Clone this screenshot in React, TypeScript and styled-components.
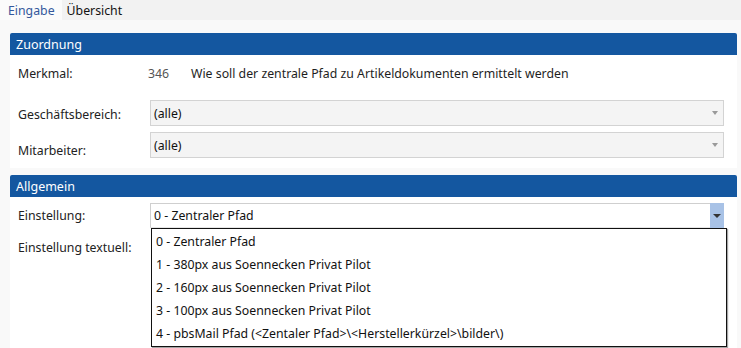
import React from "react";
import styled, { createGlobalStyle } from "styled-components";

const GlobalStyle = createGlobalStyle`
  html, body { margin: 0; padding: 0; }
  body {
    background: #f9f9f9;
    font-family: "Segoe UI", "Noto Sans", "Open Sans", sans-serif;
    font-size: 12.3px;
    color: #1e1e1e;
    overflow: hidden;
  }
`;

const Page = styled.div`
  width: 741px;
  height: 348px;
  overflow: hidden;
`;

const TabBar = styled.div`
  display: flex;
  height: 20px;
  background: #f2f2f2;
`;

const Tab = styled.div<{ $active?: boolean }>`
  display: flex;
  align-items: center;
  padding: 0 7px 0 ${(p) => (p.$active ? "8px" : "5px")};
  background: ${(p) => (p.$active ? "#fbfbfb" : "transparent")};
  color: ${(p) => (p.$active ? "#34589c" : "#111")};
  font-size: 12.3px;
`;

const Content = styled.div`
  padding: 13px 4px 0 10px;
  display: flex;
  flex-direction: column;
  gap: 7px;
`;

const Panel = styled.section`
  background: #fff;
`;

const PanelHeader = styled.div`
  height: 22px;
  display: flex;
  align-items: center;
  padding-left: 6px;
  background: #1457a0;
  color: #fff;
  font-size: 12.5px;
  border-radius: 2px 2px 0 0;
`;

const PanelBody = styled.div<{ $pb?: number }>`
  padding: 6px 13px ${(p) => p.$pb ?? 10}px 8px;
  display: flex;
  flex-direction: column;
`;

const Row = styled.div<{ $h: number; $mt?: number }>`
  display: grid;
  grid-template-columns: 132px 1fr;
  align-items: center;
  height: ${(p) => p.$h}px;
  margin-top: ${(p) => p.$mt ?? 0}px;
  position: relative;
`;

const Label = styled.div<{ $dy?: number }>`
  font-size: 12.3px;
  color: #222;
  transform: translateY(${(p) => p.$dy ?? 0}px);
`;

const InfoLine = styled.div`
  display: flex;
  align-items: center;
  font-size: 12.3px;
`;

const Code = styled.span`
  color: #555;
  width: 43px;
  margin-left: -2px;
`;

const Select = styled.div<{ $disabled?: boolean }>`
  position: relative;
  height: 100%;
  box-sizing: border-box;
  display: flex;
  align-items: center;
  padding-left: 3px;
  background: ${(p) => (p.$disabled ? "#f4f4f4" : "#fff")};
  border: 1px solid ${(p) => (p.$disabled ? "#d3d3d3" : "#cfcfcf")};
  border-bottom-color: ${(p) => (p.$disabled ? "#d3d3d3" : "#e6e6e6")};
  font-size: 12.3px;
  color: #111;
`;

const SmallArrow = styled.span`
  position: absolute;
  right: 5px;
  top: 50%;
  margin-top: -2px;
  width: 0;
  height: 0;
  border-left: 3px solid transparent;
  border-right: 3px solid transparent;
  border-top: 4px solid #9a9a9a;
`;

const ArrowButton = styled.span`
  position: absolute;
  right: -1px;
  top: -1px;
  bottom: -1px;
  width: 14px;
  background: #a8c2e6;
  display: flex;
  align-items: center;
  justify-content: center;
`;

const DarkArrow = styled.span`
  width: 0;
  height: 0;
  border-left: 4px solid transparent;
  border-right: 4px solid transparent;
  border-top: 4px solid #333;
  margin-top: 1px;
`;

const DropList = styled.ul`
  position: absolute;
  left: 133px;
  top: 100%;
  width: 576px;
  box-sizing: border-box;
  margin: 0;
  padding: 1px 0;
  list-style: none;
  background: #fff;
  border: 1px solid #111;
  box-shadow: 1px 1px 1px rgba(0, 0, 0, 0.35);
  z-index: 5;
`;

const DropItem = styled.li`
  height: 23px;
  display: flex;
  align-items: center;
  padding-left: 4px;
  font-size: 12.3px;
  color: #111;
`;

const options = [
  "0 - Zentraler Pfad",
  "1 - 380px aus Soennecken Privat Pilot",
  "2 - 160px aus Soennecken Privat Pilot",
  "3 - 100px aus Soennecken Privat Pilot",
  "4 - pbsMail Pfad (<Zentaler Pfad>\\<Herstellerkürzel>\\bilder\\)",
];

export default function App() {
  return (
    <Page>
      <GlobalStyle />
      <TabBar>
        <Tab $active>Eingabe</Tab>
        <Tab>Übersicht</Tab>
      </TabBar>
      <Content>
        <Panel>
          <PanelHeader>Zuordnung</PanelHeader>
          <PanelBody>
            <Row $h={24}>
              <Label>Merkmal:</Label>
              <InfoLine>
                <Code>346</Code>
                <span>Wie soll der zentrale Pfad zu Artikeldokumenten ermittelt werden</span>
              </InfoLine>
            </Row>
            <Row $h={26} $mt={15}>
              <Label $dy={1}>Geschäftsbereich:</Label>
              <Select $disabled>
                (alle)
                <SmallArrow />
              </Select>
            </Row>
            <Row $h={26} $mt={6}>
              <Label $dy={5}>Mitarbeiter:</Label>
              <Select $disabled>
                (alle)
                <SmallArrow />
              </Select>
            </Row>
          </PanelBody>
        </Panel>
        <Panel>
          <PanelHeader>Allgemein</PanelHeader>
          <PanelBody $pb={120}>
            <Row $h={25}>
              <Label>Einstellung:</Label>
              <Select>
                0 - Zentraler Pfad
                <ArrowButton>
                  <DarkArrow />
                </ArrowButton>
              </Select>
              <DropList>
                {options.map((o) => (
                  <DropItem key={o}>{o}</DropItem>
                ))}
              </DropList>
            </Row>
            <Row $h={26} $mt={6}>
              <Label>Einstellung textuell:</Label>
              <div />
            </Row>
          </PanelBody>
        </Panel>
      </Content>
    </Page>
  );
}
